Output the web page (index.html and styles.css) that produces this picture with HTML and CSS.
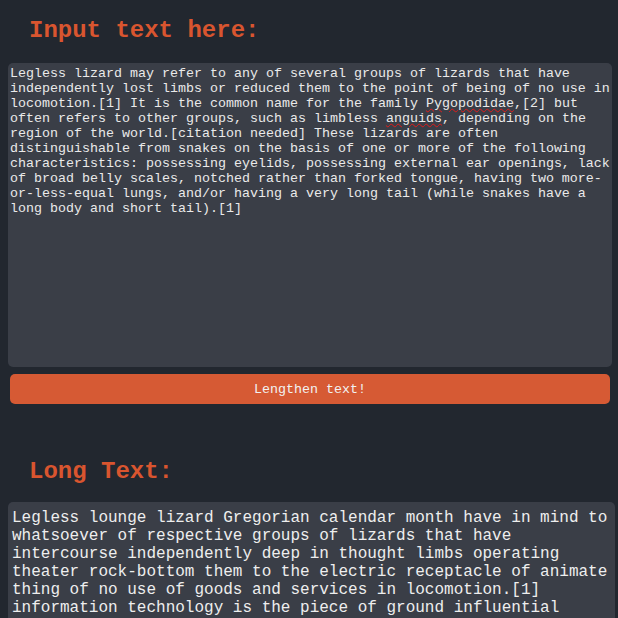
FILE: index.html
```html
<!DOCTYPE html>
<html lang="en">
<head>
<meta charset="utf-8">
<title>Lengthen text</title>
<link rel="stylesheet" href="styles.css">
</head>
<body>
<main class="page">
  <h2 class="title">Input text here:</h2>
  <div class="input-box" role="textbox" aria-multiline="true">Legless lizard may refer to any of several groups of lizards that have independently lost limbs or reduced them to the point of being of no use in locomotion.[1] It is the common name for the family <span class="typo">Pygopodidae</span>,[2] but often refers to other groups, such as limbless <span class="typo">anguids</span>, depending on the region of the world.[citation needed] These lizards are often distinguishable from snakes on the basis of one or more of the following characteristics: possessing eyelids, possessing external ear openings, lack of broad belly scales, notched rather than forked tongue, having two more-or-less-equal lungs, and/or having a very long tail (while snakes have a long body and short tail).[1]</div>
  <button class="go" type="button">Lengthen text!</button>
  <h2 class="title title-long">Long Text:</h2>
  <div class="output-box">Legless lounge lizard Gregorian calendar month have in mind to whatsoever of respective groups of lizards that have intercourse independently deep in thought limbs operating theater rock-bottom them to the electric receptacle of animate thing of no use of goods and services in locomotion.[1] information technology is the piece of ground influential appellation for the menage Pygopodidae,[2] but oftentimes refers to other groups, such as limbless anguids, depending on the region of the world.</div>
</main>
</body>
</html>
```

FILE: styles.css
```css
html, body {
  margin: 0;
  padding: 0;
  background: #22272f;
}

body {
  font-family: "Liberation Mono", "Courier New", monospace;
  color: #e8e8e8;
  overflow: hidden;
}

.page {
  padding: 0 8px;
  display: flex;
  flex-direction: column;
  align-items: flex-start;
}

.title {
  margin: 17px 0 19px;
  padding-left: 21px;
  font-family: "Liberation Mono", "Courier New", monospace;
  font-size: 24px;
  line-height: 27px;
  font-weight: bold;
  color: #d9552f;
}

.title-long {
  margin-top: 54px;
  margin-bottom: 17px;
}

.input-box {
  box-sizing: border-box;
  width: 604px;
  height: 304px;
  padding: 3px 2px 2px;
  background: #3a3e47;
  border-radius: 5px;
  font-size: 13.333px;
  line-height: 15px;
  color: #eaeaea;
  white-space: pre-wrap;
  overflow: hidden;
}

.typo {
  text-decoration: underline wavy #e01b1b;
  text-decoration-thickness: 1px;
  text-underline-offset: 1px;
}

.go {
  margin: 7px 0 0 2px;
  width: 600px;
  height: 30px;
  border: none;
  border-radius: 5px;
  background: #d65a34;
  color: #f2f2f2;
  font-family: "Liberation Mono", "Courier New", monospace;
  font-size: 13.333px;
  cursor: pointer;
}

.output-box {
  box-sizing: border-box;
  width: 607px;
  padding: 7px 4px 4px;
  background: #3a3e47;
  border-radius: 5px;
  font-size: 16px;
  line-height: 18px;
  color: #eeeeee;
}
```
